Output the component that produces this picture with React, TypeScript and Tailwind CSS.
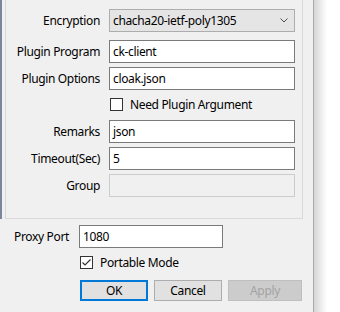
import { useState } from "react";

const fieldBox =
  "h-[23px] w-[186px] border border-[#7a7a7a] bg-white px-[3px] flex items-center";

function Row({ label, children }: { label: string; children: React.ReactNode }) {
  return (
    <div className="flex items-center">
      <div className="w-[94px] text-right">{label}</div>
      <div className="ml-[9px]">{children}</div>
    </div>
  );
}

function CheckBox({ checked, label }: { checked: boolean; label: string }) {
  return (
    <div className="flex items-center">
      <div className="flex h-[13px] w-[13px] items-center justify-center border border-[#333333] bg-white">
        {checked && (
          <svg width="11" height="11" viewBox="0 0 11 11">
            <polyline
              points="1.5,5.5 4,8 9.5,2.5"
              fill="none"
              stroke="#333333"
              strokeWidth="1.2"
            />
          </svg>
        )}
      </div>
      <span className="ml-[7px]">{label}</span>
    </div>
  );
}

export default function App() {
  const [portable] = useState(true);

  return (
    <div className="flex h-[312px] w-[340px] bg-white font-['Noto_Sans',sans-serif] text-[12px] leading-none tracking-[-0.35px] text-black">
      <div className="flex w-[313px] flex-col bg-[#f0f0f0]">
        {/* server settings group, top edge scrolled off */}
        <div className="flex">
          <div className="h-[219px] w-[2px] bg-[#7b8698]" />
          <div className="ml-[3px] flex h-[219px] w-[298px] flex-col border-x border-b border-[#d9d9d9] pt-[9px]">
            <Row label="Encryption">
              <div className="flex h-[23px] w-[186px] items-center justify-between border border-[#adadad] bg-[#e5e5e5] pl-[3px] pr-[6px]">
                <span>chacha20-ietf-poly1305</span>
                <svg width="8" height="5" viewBox="0 0 8 5">
                  <polyline points="0.5,0.5 4,4 7.5,0.5" fill="none" stroke="#505050" strokeWidth="1" />
                </svg>
              </div>
            </Row>
            <div className="mt-[8px]">
              <Row label="Plugin Program">
                <div className={fieldBox}>ck-client</div>
              </Row>
            </div>
            <div className="mt-[4px]">
              <Row label="Plugin Options">
                <div className={fieldBox}>cloak.json</div>
              </Row>
            </div>
            <div className="ml-[104px] mt-[8px]">
              <CheckBox checked={false} label="Need Plugin Argument" />
            </div>
            <div className="mt-[9px]">
              <Row label="Remarks">
                <div className={fieldBox}>json</div>
              </Row>
            </div>
            <div className="mt-[4px]">
              <Row label="Timeout(Sec)">
                <div className={fieldBox}>5</div>
              </Row>
            </div>
            <div className="mt-[4px]">
              <Row label="Group">
                <div className="h-[23px] w-[186px] border border-[#cccccc] bg-[#f0f0f0]" />
              </Row>
            </div>
          </div>
        </div>

        <div className="mt-[6px] flex items-center">
          <div className="w-[79px] pr-[10px] text-right">Proxy Port</div>
          <div className="flex h-[23px] w-[144px] items-center border border-[#7a7a7a] bg-white px-[3px]">
            1080
          </div>
        </div>

        <div className="ml-[80px] mt-[8px]">
          <CheckBox checked={portable} label="Portable Mode" />
        </div>

        <div className="ml-[80px] mt-[11px] flex gap-[6px]">
          <button className="h-[21px] w-[68px] border-2 border-[#0078d7] bg-[#e1e1e1]">OK</button>
          <button className="h-[21px] w-[68px] border border-[#adadad] bg-[#e1e1e1]">Cancel</button>
          <button className="h-[21px] w-[74px] border border-[#bfbfbf] bg-[#cccccc] text-[#a3a3a3]" disabled>
            Apply
          </button>
        </div>
      </div>
      <div className="w-px bg-[#a9a9a9]" />
      <div className="w-[13px] bg-gradient-to-r from-[#d6d6d6] to-white" />
    </div>
  );
}
